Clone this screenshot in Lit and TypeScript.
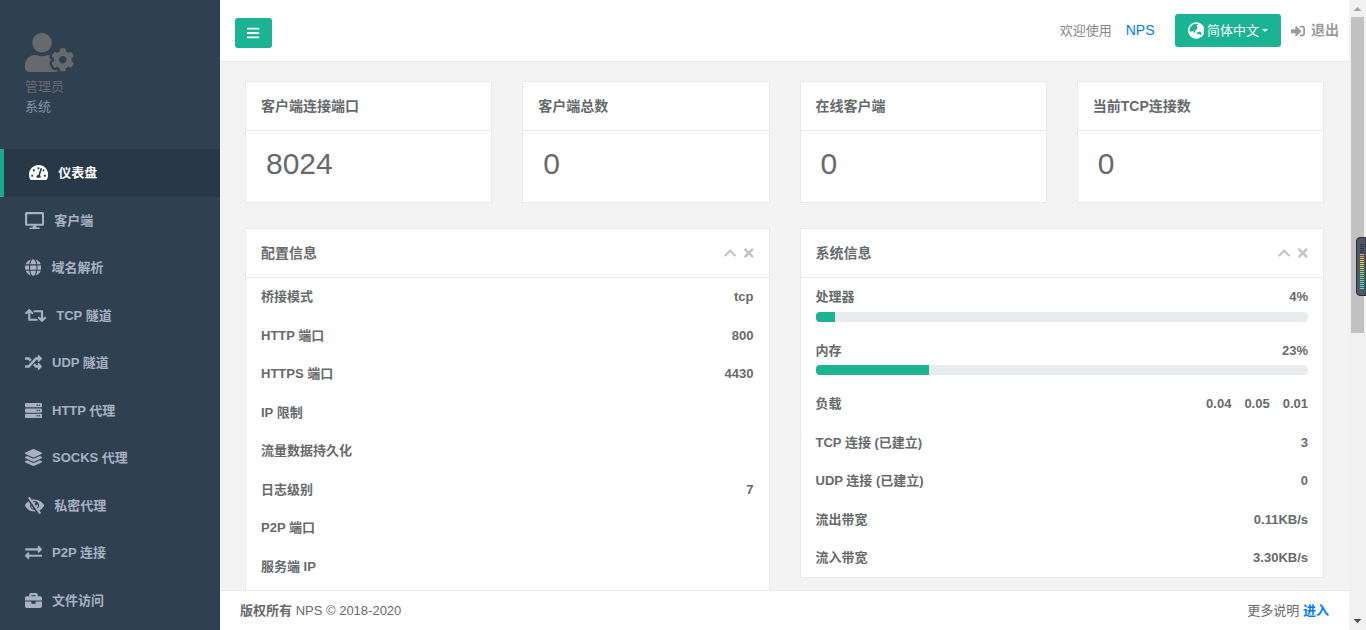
import { LitElement, html, css, svg } from "lit";
import { customElement, property, state } from "lit/decorators.js";

interface Glyph {
  width: number;
  path: string;
}

const ICONS: Record<string, Glyph> = {
  userCog: {
    width: 640,
    path: "M610.5 373.3c2.6-14.1 2.6-28.5 0-42.6l25.8-14.9c3-1.7 4.3-5.2 3.3-8.5-6.7-21.6-18.2-41.2-33.2-57.4-2.3-2.5-6-3.1-9-1.4l-25.8 14.9c-10.9-9.3-23.4-16.5-36.9-21.3v-29.8c0-3.4-2.4-6.4-5.7-7.1-22.3-5-45-4.8-66.2 0-3.3.7-5.7 3.7-5.7 7.1v29.8c-13.5 4.8-26 12-36.9 21.3l-25.8-14.9c-2.9-1.7-6.7-1.1-9 1.4-15 16.2-26.5 35.8-33.2 57.4-1 3.3.4 6.8 3.3 8.5l25.8 14.9c-2.6 14.1-2.6 28.5 0 42.6l-25.8 14.9c-3 1.7-4.3 5.2-3.3 8.5 6.7 21.6 18.2 41.1 33.2 57.4 2.3 2.5 6 3.1 9 1.4l25.8-14.9c10.9 9.3 23.4 16.5 36.9 21.3v29.8c0 3.4 2.4 6.4 5.7 7.1 22.3 5 45 4.8 66.2 0 3.3-.7 5.7-3.7 5.7-7.1v-29.8c13.5-4.8 26-12 36.9-21.3l25.8 14.9c2.9 1.7 6.7 1.1 9-1.4 15-16.2 26.5-35.8 33.2-57.4 1-3.3-.4-6.8-3.3-8.5l-25.8-14.9zM496 400.5c-26.8 0-48.5-21.8-48.5-48.5s21.8-48.5 48.5-48.5 48.5 21.8 48.5 48.5-21.7 48.5-48.5 48.5zM224 256c70.7 0 128-57.3 128-128S294.7 0 224 0 96 57.3 96 128s57.3 128 128 128zm201.2 226.5c-2.3-1.2-4.6-2.6-6.8-3.9l-7.9 4.6c-6 3.4-12.8 5.3-19.6 5.3-10.9 0-21.4-4.6-28.9-12.6-18.3-19.8-32.3-43.9-40.2-69.6-5.5-17.7 1.9-36.4 17.9-45.7l7.9-4.6c-.1-2.6-.1-5.2 0-7.8l-7.9-4.6c-16-9.2-23.4-28-17.9-45.7.9-2.9 2.2-5.8 3.2-8.7-3.8-.3-7.5-1.2-11.4-1.2h-16.7c-22.2 10.2-46.9 16-72.9 16s-50.6-5.8-72.9-16h-16.7C60.2 288 0 348.2 0 422.4V464c0 26.5 21.5 48 48 48h352c10.1 0 19.5-3.2 27.2-8.5-1.2-3.8-2-7.7-2-11.8v-9.2z",
  },
  dashboard: {
    width: 576,
    path: "M288 32C128.94 32 0 160.94 0 320c0 52.8 14.25 102.26 39.06 144.8 5.61 9.62 16.3 15.2 27.44 15.2h443c11.14 0 21.83-5.58 27.44-15.2C561.75 422.26 576 372.8 576 320c0-159.06-128.94-288-288-288zm0 64c14.71 0 26.58 10.13 30.32 23.65-1.11 2.26-2.64 4.23-3.45 6.67l-9.22 27.67c-5.13 3.49-10.97 6.01-17.64 6.01-17.67 0-32-14.33-32-32S270.33 96 288 96zM96 384c-17.67 0-32-14.33-32-32s14.33-32 32-32 32 14.33 32 32-14.33 32-32 32zm48-160c-17.67 0-32-14.33-32-32s14.33-32 32-32 32 14.33 32 32-14.33 32-32 32zm246.77-72.41l-61.33 184C343.13 347.33 352 364.54 352 384c0 11.72-3.38 22.55-8.88 32H232.88c-5.5-9.45-8.88-20.28-8.88-32 0-33.94 26.5-61.43 59.9-63.59l61.34-184.01c4.17-12.56 17.73-19.45 30.36-15.17 12.57 4.19 19.35 17.79 15.17 30.36zm14.66 57.2l15.52-46.55c3.47-1.29 7.13-2.23 11.05-2.23 17.67 0 32 14.33 32 32s-14.33 32-32 32c-11.38-.01-20.89-6.28-26.57-15.22zM480 384c-17.67 0-32-14.33-32-32s14.33-32 32-32 32 14.33 32 32-14.33 32-32 32z",
  },
  desktop: {
    width: 576,
    path: "M528 0H48C21.5 0 0 21.5 0 48v320c0 26.5 21.5 48 48 48h192l-16 48h-72c-13.3 0-24 10.7-24 24s10.7 24 24 24h272c13.3 0 24-10.7 24-24s-10.7-24-24-24h-72l-16-48h192c26.5 0 48-21.5 48-48V48c0-26.5-21.5-48-48-48zm-16 352H64V64h448v288z",
  },
  globe: {
    width: 496,
    path: "M336.5 160C322 70.7 287.8 8 248 8s-74 62.7-88.5 152h177zM152 256c0 22.2 1.2 43.5 3.3 64h185.3c2.1-20.5 3.3-41.8 3.3-64s-1.2-43.5-3.3-64H155.3c-2.1 20.5-3.3 41.8-3.3 64zm324.7-96c-28.6-67.9-86.5-120.4-158-141.6 24.4 33.8 41.2 84.7 50 141.6h108zM177.2 18.4C105.8 39.6 47.8 92.1 19.3 160h108c8.7-56.9 25.5-107.8 49.9-141.6zM487.4 192H372.7c2.1 21 3.3 42.5 3.3 64s-1.2 43-3.3 64h114.6c5.5-20.5 8.6-41.8 8.6-64s-3.1-43.5-8.5-64zM120 256c0-21.5 1.2-43 3.3-64H8.6C3.2 212.5 0 233.8 0 256s3.2 43.5 8.6 64h114.6c-2-21-3.2-42.5-3.2-64zm39.5 96c14.5 89.3 48.7 152 88.5 152s74-62.7 88.5-152h-177zm159.3 141.6c71.4-21.2 129.4-73.7 158-141.6h-108c-8.8 56.9-25.6 107.8-50 141.6zM19.3 352c28.6 67.9 86.5 120.4 158 141.6-24.4-33.8-41.2-84.7-50-141.6h-108z",
  },
  retweet: {
    width: 640,
    path: "M629.657 343.598L528.971 444.284c-9.373 9.372-24.568 9.372-33.941 0L394.343 343.598c-9.373-9.373-9.373-24.569 0-33.941l10.823-10.823c9.562-9.562 25.133-9.34 34.419.492L480 342.118V160H292.451a24.005 24.005 0 0 1-16.971-7.029l-16-16C244.361 121.851 255.069 96 276.451 96H520c13.255 0 24 10.745 24 24v222.118l40.416-42.792c9.285-9.831 24.856-10.054 34.419-.492l10.823 10.823c9.372 9.372 9.372 24.569-.001 33.941zm-265.138 15.431A23.999 23.999 0 0 0 347.548 352H160V169.881l40.416 42.792c9.286 9.831 24.856 10.054 34.419.491l10.822-10.822c9.373-9.373 9.373-24.569 0-33.941L144.971 67.716c-9.373-9.373-24.569-9.373-33.941 0L10.343 168.402c-9.373 9.373-9.373 24.569 0 33.941l10.822 10.822c9.562 9.562 25.133 9.34 34.419-.491L96 169.881V392c0 13.255 10.745 24 24 24h243.549c21.382 0 32.09-25.851 16.971-40.971l-16.001-16z",
  },
  random: {
    width: 512,
    path: "M504.971 359.029c9.373 9.373 9.373 24.569 0 33.941l-80 79.984c-15.01 15.01-40.971 4.49-40.971-16.971V416h-58.785a12.004 12.004 0 0 1-8.773-3.812l-70.556-75.596 53.333-57.143L352 336h32v-39.981c0-21.438 25.943-31.998 40.971-16.971l80 79.981zM12 176h84l52.781 56.551 53.333-57.143-70.556-75.596A11.999 11.999 0 0 0 122.785 96H12c-6.627 0-12 5.373-12 12v56c0 6.627 5.373 12 12 12zm372 0v39.984c0 21.46 25.961 31.98 40.971 16.971l80-79.984c9.373-9.373 9.373-24.569 0-33.941l-80-79.981C409.943 24.021 384 34.582 384 56.019V96h-58.785a12.004 12.004 0 0 0-8.773 3.812L96 336H12c-6.627 0-12 5.373-12 12v56c0 6.627 5.373 12 12 12h110.785c3.326 0 6.503-1.381 8.773-3.812L352 176h32z",
  },
  server: {
    width: 512,
    path: "M480 160H32c-17.673 0-32-14.327-32-32V64c0-17.673 14.327-32 32-32h448c17.673 0 32 14.327 32 32v64c0 17.673-14.327 32-32 32zm-48-88c-13.255 0-24 10.745-24 24s10.745 24 24 24 24-10.745 24-24-10.745-24-24-24zm-64 0c-13.255 0-24 10.745-24 24s10.745 24 24 24 24-10.745 24-24-10.745-24-24-24zm112 248H32c-17.673 0-32-14.327-32-32v-64c0-17.673 14.327-32 32-32h448c17.673 0 32 14.327 32 32v64c0 17.673-14.327 32-32 32zm-48-88c-13.255 0-24 10.745-24 24s10.745 24 24 24 24-10.745 24-24-10.745-24-24-24zm-64 0c-13.255 0-24 10.745-24 24s10.745 24 24 24 24-10.745 24-24-10.745-24-24-24zm112 248H32c-17.673 0-32-14.327-32-32v-64c0-17.673 14.327-32 32-32h448c17.673 0 32 14.327 32 32v64c0 17.673-14.327 32-32 32zm-48-88c-13.255 0-24 10.745-24 24s10.745 24 24 24 24-10.745 24-24-10.745-24-24-24zm-64 0c-13.255 0-24 10.745-24 24s10.745 24 24 24 24-10.745 24-24-10.745-24-24-24z",
  },
  layers: {
    width: 512,
    path: "M12.41 148.02l232.94 105.67c6.8 3.09 14.49 3.09 21.29 0l232.94-105.67c16.55-7.51 16.55-32.52 0-40.03L266.65 2.31a25.607 25.607 0 0 0-21.29 0L12.41 107.98c-16.55 7.51-16.55 32.53 0 40.04zm487.18 88.28l-58.09-26.33-161.64 73.27c-7.56 3.43-15.59 5.17-23.86 5.17s-16.29-1.74-23.86-5.17L70.51 209.97l-58.1 26.33c-16.55 7.5-16.55 32.5 0 40l232.94 105.59c6.8 3.08 14.49 3.08 21.29 0L499.59 276.3c16.55-7.5 16.55-32.5 0-40zm0 127.8l-57.87-26.23-161.86 73.37c-7.56 3.43-15.59 5.17-23.86 5.17s-16.29-1.74-23.86-5.17L70.29 337.87 12.41 364.1c-16.55 7.5-16.55 32.5 0 40l232.94 105.59c6.8 3.08 14.49 3.08 21.29 0L499.59 404.1c16.55-7.5 16.55-32.5 0-40z",
  },
  eyeSlash: {
    width: 576,
    path: "M286.693 391.984l32.579 46.542A333.958 333.958 0 0 1 288 440C168.19 440 63.177 376.183 6.646 280.369a47.999 47.999 0 0 1 0-48.739c24.023-40.766 56.913-75.775 96.024-102.537l57.077 81.539C154.736 224.82 152 240.087 152 256c0 74.736 60.135 135.282 134.693 135.984zm282.661-111.615c-31.667 53.737-78.747 97.46-135.175 125.475l.011.015 41.47 59.2c7.6 10.86 4.96 25.82-5.9 33.42l-13.11 9.18c-10.86 7.6-25.82 4.96-33.42-5.9L100.34 46.94c-7.6-10.86-4.96-25.82 5.9-33.42l13.11-9.18c10.86-7.6 25.82-4.96 33.42 5.9l51.038 72.617C230.68 75.776 258.905 72 288 72c119.81 0 224.823 63.817 281.354 159.631a48.002 48.002 0 0 1 0 48.738zM424 256c0-75.174-60.838-136-136-136-17.939 0-35.056 3.473-50.729 9.772l19.299 27.058c25.869-8.171 55.044-6.163 80.4 7.41h-.03c-23.65 0-42.82 19.17-42.82 42.82 0 23.626 19.147 42.82 42.82 42.82 23.65 0 42.82-19.17 42.82-42.82v-.03c18.462 34.49 16.312 77.914-8.25 110.95v.01l19.314 27.061C411.496 321.2 424 290.074 424 256zM262.014 356.727l-77.53-110.757c-5.014 52.387 29.314 98.354 77.53 110.757z",
  },
  exchange: {
    width: 512,
    path: "M0 168v-16c0-13.255 10.745-24 24-24h360V80c0-21.367 25.899-32.042 40.971-16.971l80 80c9.372 9.373 9.372 24.569 0 33.941l-80 80C409.956 271.982 384 261.456 384 240v-48H24c-13.255 0-24-10.745-24-24zm488 152H128v-48c0-21.314-25.862-32.08-40.971-16.971l-80 80c-9.372 9.373-9.372 24.569 0 33.941l80 80C102.057 463.997 128 453.437 128 432v-48h360c13.255 0 24-10.745 24-24v-16c0-13.255-10.745-24-24-24z",
  },
  briefcase: {
    width: 512,
    path: "M320 336c0 8.84-7.16 16-16 16h-96c-8.84 0-16-7.16-16-16v-48H0v144c0 25.6 22.4 48 48 48h416c25.6 0 48-22.4 48-48V288H320v48zm144-208h-80V80c0-25.6-22.4-48-48-48H176c-25.6 0-48 22.4-48 48v48H48c-25.6 0-48 22.4-48 48v80h512v-80c0-25.6-22.4-48-48-48zm-144 0H192V96h128v32z",
  },
  bars: {
    width: 448,
    path: "M16 132h416c8.837 0 16-7.163 16-16V76c0-8.837-7.163-16-16-16H16C7.163 60 0 67.163 0 76v40c0 8.837 7.163 16 16 16zm0 160h416c8.837 0 16-7.163 16-16v-40c0-8.837-7.163-16-16-16H16c-8.837 0-16 7.163-16 16v40c0 8.837 7.163 16 16 16zm0 160h416c8.837 0 16-7.163 16-16v-40c0-8.837-7.163-16-16-16H16c-8.837 0-16 7.163-16 16v40c0 8.837 7.163 16 16 16z",
  },
  earth: {
    width: 496,
    path: "M248 8C111.03 8 0 119.03 0 256s111.03 248 248 248 248-111.03 248-248S384.97 8 248 8zm-11.34 240.23c-2.89 4.82-8.1 7.77-13.72 7.77h-.31c-4.24 0-8.31 1.69-11.31 4.69l-5.66 5.66c-3.12 3.12-3.12 8.19 0 11.31l5.66 5.66c3 3 4.69 7.07 4.69 11.31V304c0 8.84-7.16 16-16 16h-6.11c-6.06 0-11.6-3.42-14.31-8.85l-22.62-45.23c-2.44-4.88-8.95-5.94-12.81-2.08l-19.47 19.46c-3 3-7.07 4.69-11.31 4.69H50.81C49.12 277.55 48 266.92 48 256c0-110.28 89.72-200 200-200 21.51 0 42.2 3.51 61.63 9.82l-50.16 38.53c-5.11 3.41-4.63 11.06.86 13.81l10.83 5.41c5.42 2.71 8.84 8.25 8.84 14.31V216c0 4.42-3.58 8-8 8h-3.06c-3.03 0-5.8-1.71-7.15-4.42-1.56-3.12-5.96-3.29-7.76-.3l-17.37 28.95zM408 358.43c0 4.24-1.69 8.31-4.69 11.31l-9.57 9.57c-3 3-7.07 4.69-11.31 4.69h-15.16c-4.24 0-8.31-1.69-11.31-4.69l-13.01-13.01a26.767 26.767 0 0 0-25.42-7.04l-21.27 5.32c-1.27.32-2.57.48-3.88.48h-10.34c-4.24 0-8.31-1.69-11.31-4.69l-11.91-11.91a8.008 8.008 0 0 1-2.34-5.66v-10.2c0-3.27 1.99-6.21 5.03-7.43l39.34-15.74c1.98-.79 3.86-1.82 5.59-3.05l23.71-16.89a7.978 7.978 0 0 1 4.64-1.48h12.09c3.23 0 6.15 1.94 7.39 4.93l5.35 12.85a4 4 0 0 0 3.69 2.46h3.8c1.78 0 3.35-1.18 3.84-2.88l4.2-14.47c.5-1.71 2.06-2.88 3.84-2.88h6.06c2.21 0 4 1.79 4 4v12.93c0 2.12.84 4.16 2.34 5.66l11.91 11.91c3 3 4.69 7.07 4.69 11.31v24.6z",
  },
  signIn: {
    width: 512,
    path: "M416 448h-84c-6.6 0-12-5.4-12-12v-40c0-6.6 5.4-12 12-12h84c17.7 0 32-14.3 32-32V160c0-17.7-14.3-32-32-32h-84c-6.6 0-12-5.4-12-12V76c0-6.6 5.4-12 12-12h84c53 0 96 43 96 96v192c0 53-43 96-96 96zm-47-201L201 79c-15-15-41-4.5-41 17v96H24c-13.3 0-24 10.7-24 24v96c0 13.3 10.7 24 24 24h136v96c0 21.5 26 32 41 17l168-168c9.3-9.4 9.3-24.6 0-34z",
  },
  chevronUp: {
    width: 448,
    path: "M240.971 130.524l194.343 194.343c9.373 9.373 9.373 24.569 0 33.941l-22.667 22.667c-9.357 9.357-24.522 9.375-33.901.04L224 227.495 69.255 381.516c-9.379 9.335-24.544 9.317-33.901-.04l-22.667-22.667c-9.373-9.373-9.373-24.569 0-33.941L207.03 130.525c9.372-9.373 24.568-9.373 33.941-.001z",
  },
  times: {
    width: 352,
    path: "M242.72 256l100.07-100.07c12.28-12.28 12.28-32.19 0-44.48l-22.24-22.24c-12.28-12.28-32.19-12.28-44.48 0L176 189.28 75.93 89.21c-12.28-12.28-32.19-12.28-44.48 0L9.21 111.45c-12.28 12.28-12.28 32.19 0 44.48L109.28 256 9.21 356.07c-12.28 12.28-12.28 32.19 0 44.48l22.24 22.24c12.28 12.28 32.2 12.28 44.48 0L176 322.72l100.07 100.07c12.28 12.28 32.2 12.28 44.48 0l22.24-22.24c12.28-12.28 12.28-32.19 0-44.48L242.72 256z",
  },
};

/* Single-path icon; its height comes from --icon-size, its width from the glyph. */
@customElement("nps-icon")
export class NpsIcon extends LitElement {
  @property() name = "";

  static styles = css`
    :host {
      display: inline-flex;
      flex: none;
    }
    .glyph {
      display: block;
      height: var(--icon-size, 14px);
      width: auto;
      fill: currentColor;
    }
  `;

  render() {
    const icon = ICONS[this.name];
    if (!icon) return html``;
    return html`<svg class="glyph" viewBox="0 0 ${icon.width} 512" aria-hidden="true">
      ${svg`<path d=${icon.path}></path>`}
    </svg>`;
  }
}

@customElement("nps-sidebar")
export class NpsSidebar extends LitElement {
  @state() private active = "仪表盘";

  private items = [
    { icon: "dashboard", label: "仪表盘" },
    { icon: "desktop", label: "客户端" },
    { icon: "globe", label: "域名解析" },
    { icon: "retweet", label: "TCP 隧道" },
    { icon: "random", label: "UDP 隧道" },
    { icon: "server", label: "HTTP 代理" },
    { icon: "layers", label: "SOCKS 代理" },
    { icon: "eyeSlash", label: "私密代理" },
    { icon: "exchange", label: "P2P 连接" },
    { icon: "briefcase", label: "文件访问" },
  ];

  static styles = css`
    :host {
      display: block;
      background: #2f4050;
      overflow: hidden;
    }
    .profile {
      display: flex;
      flex-direction: column;
      align-items: flex-start;
      padding: 33px 25px;
      color: #676a6c;
    }
    .avatar {
      --icon-size: 39px;
      margin-bottom: 5px;
    }
    .role {
      color: #8095a8;
    }
    .menu {
      list-style: none;
      margin: 0;
      padding: 0;
    }
    .item {
      display: flex;
      align-items: center;
      gap: 10px;
      padding: 14px 25px;
      color: #a7b1c2;
      font-weight: 600;
      text-decoration: none;
      --icon-size: 17px;
    }
    .item.active {
      background: #293846;
      border-left: 4px solid #19aa8d;
      color: #fff;
    }
  `;

  render() {
    return html`
      <div class="profile">
        <nps-icon class="avatar" name="userCog"></nps-icon>
        <span>管理员</span>
        <span class="role">系统</span>
      </div>
      <nav>
        <ul class="menu">
          ${this.items.map(
            (item) => html`<li>
              <a
                class="item ${item.label === this.active ? "active" : ""}"
                href="#"
                @click=${() => (this.active = item.label)}
                ><nps-icon name=${item.icon}></nps-icon><span>${item.label}</span></a
              >
            </li>`
          )}
        </ul>
      </nav>
    `;
  }
}

@customElement("nps-card")
export class NpsCard extends LitElement {
  @property() heading = "";
  @property({ type: Boolean }) tools = false;

  static styles = css`
    :host {
      display: block;
      background: #fff;
      border: 1px solid #e7eaec;
    }
    .head {
      display: flex;
      align-items: center;
      justify-content: space-between;
      height: 48px;
      padding: 0 15px;
      border-bottom: 1px solid #e7eaec;
    }
    .title {
      margin: 0;
      font-size: 14px;
      font-weight: 600;
    }
    .tools {
      display: flex;
      gap: 8px;
    }
    .tool {
      display: flex;
      padding: 0;
      border: 0;
      background: none;
      color: #c4c4c4;
    }
  `;

  render() {
    return html`
      <header class="head">
        <h5 class="title">${this.heading}</h5>
        ${this.tools
          ? html`<div class="tools">
              <button class="tool" aria-label="收起"><nps-icon name="chevronUp"></nps-icon></button>
              <button class="tool" aria-label="关闭"><nps-icon name="times"></nps-icon></button>
            </div>`
          : ""}
      </header>
      <slot></slot>
    `;
  }
}

@customElement("nps-scrollbar")
export class NpsScrollbar extends LitElement {
  static styles = css`
    :host {
      display: flex;
      flex-direction: column;
      align-items: center;
      background: #f1f1f1;
    }
    .arrow {
      flex: none;
      display: block;
      width: 17px;
      height: 17px;
    }
    .up {
      fill: #a3a3a3;
    }
    .down {
      fill: #505050;
    }
    .track {
      flex: 1;
      width: 13px;
    }
    .thumb {
      height: 53%;
      background: #c1c1c1;
    }
  `;

  render() {
    return html`
      <svg class="arrow up" viewBox="0 0 17 17"><path d="M4.500 11 8.500 7l4 4z"></path></svg>
      <div class="track"><div class="thumb"></div></div>
      <svg class="arrow down" viewBox="0 0 17 17"><path d="M4.500 6h8l-4 4z"></path></svg>
    `;
  }
}

@customElement("app-root")
export class AppRoot extends LitElement {
  private counters = [
    { title: "客户端连接端口", value: "8024" },
    { title: "客户端总数", value: "0" },
    { title: "在线客户端", value: "0" },
    { title: "当前TCP连接数", value: "0" },
  ];

  private config = [
    ["桥接模式", "tcp"],
    ["HTTP 端口", "800"],
    ["HTTPS 端口", "4430"],
    ["IP 限制", ""],
    ["流量数据持久化", ""],
    ["日志级别", "7"],
    ["P2P 端口", ""],
    ["服务端 IP", ""],
  ];

  private gauges = [
    { label: "处理器", percent: 4 },
    { label: "内存", percent: 23 },
  ];

  private load = ["0.04", "0.05", "0.01"];

  private system = [
    ["TCP 连接 (已建立)", "3"],
    ["UDP 连接 (已建立)", "0"],
    ["流出带宽", "0.11KB/s"],
    ["流入带宽", "3.30KB/s"],
  ];

  static styles = css`
    :host {
      display: grid;
      grid-template-columns: 220px minmax(0, 1fr) 17px;
      position: relative;
      height: 100vh;
      overflow: hidden;
      background: #f3f3f4;
      color: #676a6c;
      font-family: "Liberation Sans", "Noto Sans CJK SC", sans-serif;
      font-size: 13px;
      line-height: 1.5;
    }
    .page {
      display: flex;
      flex-direction: column;
      min-height: 0;
      height: 100vh;
    }
    button {
      font: inherit;
      cursor: pointer;
    }
    a {
      color: #007bff;
      text-decoration: none;
    }
    .topbar {
      flex: none;
      display: flex;
      align-items: center;
      justify-content: space-between;
      height: 61px;
      padding: 0 10px 0 15px;
      background: #fff;
      border-bottom: 1px solid #e7eaec;
    }
    .toggle,
    .language {
      display: flex;
      align-items: center;
      border: 0;
      border-radius: 3px;
      background: #1ab394;
      color: #fff;
    }
    .toggle {
      justify-content: center;
      width: 37px;
      height: 30px;
      margin-top: 4px;
      padding: 0;
    }
    .links {
      display: flex;
      align-items: center;
    }
    .welcome {
      color: #888;
    }
    .brand {
      margin: 0 20px 0 14px;
      font-size: 14px;
    }
    .language {
      height: 33px;
      padding: 0 13px;
      gap: 3px;
      --icon-size: 17px;
    }
    .caret {
      border: 3px solid transparent;
      border-top-color: #fff;
      border-bottom: 0;
    }
    .logout {
      display: flex;
      align-items: center;
      gap: 6px;
      margin-left: 10px;
      color: #999c9e;
      font-size: 14px;
      font-weight: 600;
    }
    .content {
      flex: 1;
      min-height: 0;
      overflow: hidden;
      padding: 19px 25px 0;
    }
    .counters {
      display: grid;
      grid-template-columns: repeat(4, minmax(0, 1fr));
      gap: 30px;
    }
    .count {
      margin: 0;
      height: 71px;
      padding: 10px 20px;
      box-sizing: border-box;
      font-size: 30px;
    }
    .panels {
      display: grid;
      grid-template-columns: repeat(2, minmax(0, 1fr));
      align-items: start;
      gap: 30px;
      margin-top: 25px;
    }
    .rows {
      display: flex;
      flex-direction: column;
      gap: 19px;
      margin: 0;
      padding: 9px 15px;
      font-weight: 600;
    }
    .rows.long {
      padding-bottom: 29px;
    }
    .row {
      display: flex;
      justify-content: space-between;
    }
    .row dt,
    .row dd {
      margin: 0;
    }
    .load {
      display: flex;
      gap: 13px;
    }
    .bar {
      height: 10px;
      margin: 5px 0 0;
      border-radius: 4px;
      background: #e9ecef;
      overflow: hidden;
    }
    .fill {
      height: 100%;
      background: #1ab394;
    }
    .footer {
      flex: none;
      display: flex;
      align-items: center;
      justify-content: space-between;
      height: 39px;
      padding: 0 20px;
      background: #fff;
      border-top: 1px solid #e7eaec;
    }
    .meter {
      position: absolute;
      top: 237px;
      right: 0;
      width: 10px;
      height: 59px;
    }
  `;

  private renderRow(label: string, value: unknown) {
    return html`<div class="row"><dt>${label}</dt><dd>${value}</dd></div>`;
  }

  /* Level meter docked to the window edge, over the scrollbar. */
  private renderMeter() {
    const colours = [
      "#30323f", "#30323f", "#30323f", "#30323f", "#30323f", "#f0a040", "#f0b040", "#f2c23e",
      "#f0d040", "#e6dc44", "#d4e04c", "#c0e454", "#ace45c", "#98e468", "#88e478", "#78e488",
      "#6ce498", "#60e4a8", "#58e4b4", "#50e4c0", "#4ce4c8", "#48e4cc", "#48e4d0",
    ];
    return html`<svg class="meter" viewBox="0 0 10 59" aria-hidden="true">
      <path d="M10 .5H4A3.500 3.500 0 0 0 .5 4v51A3.500 3.500 0 0 0 4 58.500h6z" fill="#505566" stroke="#2c2e3c"></path>
      ${colours.map((c, i) => svg`<rect x="4" y=${7 + i * 2} width="4" height="1" fill=${c}></rect>`)}
    </svg>`;
  }

  render() {
    return html`
      <nps-sidebar></nps-sidebar>
      <div class="page">
        <header class="topbar">
          <button class="toggle" aria-label="菜单"><nps-icon name="bars"></nps-icon></button>
          <div class="links">
            <span class="welcome">欢迎使用</span>
            <a class="brand" href="#">NPS</a>
            <button class="language" aria-haspopup="menu">
              <nps-icon name="earth"></nps-icon><span>简体中文</span><span class="caret"></span>
            </button>
            <a class="logout" href="#"><nps-icon name="signIn"></nps-icon>退出</a>
          </div>
        </header>
        <main class="content">
          <section class="counters">
            ${this.counters.map(
              (c) => html`<nps-card heading=${c.title}><p class="count">${c.value}</p></nps-card>`
            )}
          </section>
          <section class="panels">
            <nps-card heading="配置信息" tools>
              <dl class="rows long">${this.config.map(([k, v]) => this.renderRow(k, v))}</dl>
            </nps-card>
            <nps-card heading="系统信息" tools>
              <dl class="rows">
                ${this.gauges.map(
                  (g) => html`<div>
                    ${this.renderRow(g.label, `${g.percent}%`)}
                    <dd
                      class="bar"
                      role="progressbar"
                      aria-label=${g.label}
                      aria-valuenow=${g.percent}
                    >
                      <div class="fill" style="width: ${g.percent}%"></div>
                    </dd>
                  </div>`
                )}
                ${this.renderRow(
                  "负载",
                  html`<span class="load">${this.load.map((l) => html`<span>${l}</span>`)}</span>`
                )}
                ${this.system.map(([k, v]) => this.renderRow(k, v))}
              </dl>
            </nps-card>
          </section>
        </main>
        <footer class="footer">
          <span><strong>版权所有</strong> NPS © 2018-2020</span>
          <span>更多说明 <a href="#"><strong>进入</strong></a></span>
        </footer>
      </div>
      <nps-scrollbar></nps-scrollbar>
      ${this.renderMeter()}
    `;
  }
}
